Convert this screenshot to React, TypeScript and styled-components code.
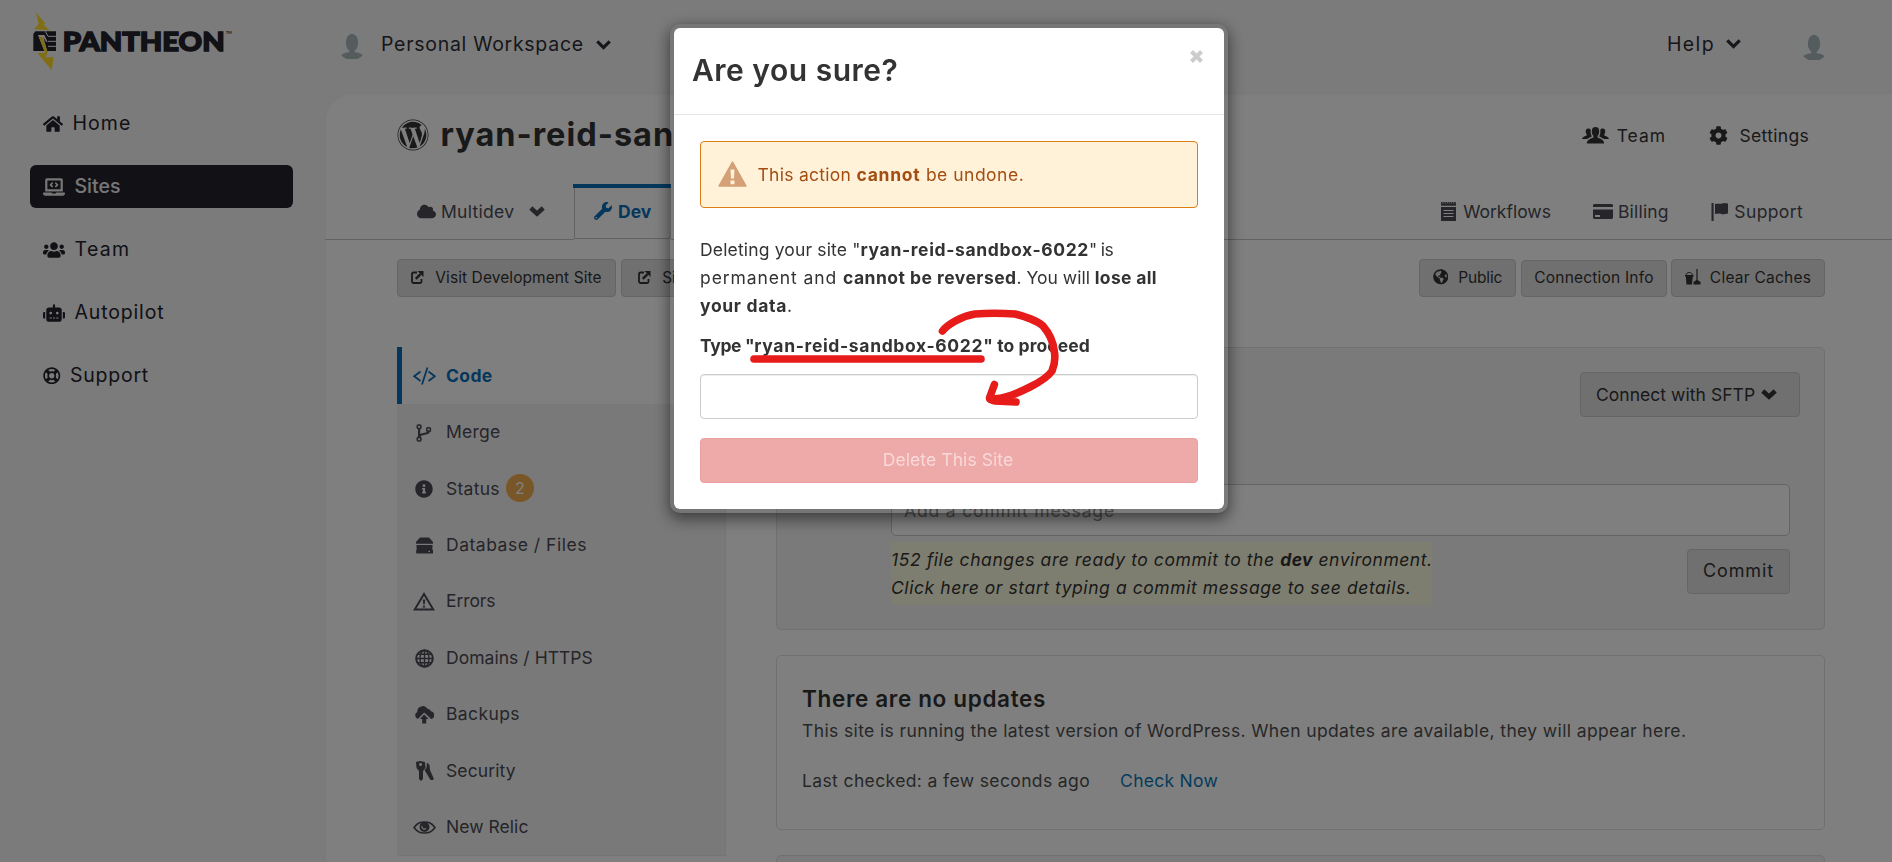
import React from "react";
import styled, { createGlobalStyle, css } from "styled-components";
import {
  FaCloud,
  FaCog,
  FaGlobeAmericas,
  FaHome,
  FaInfoCircle,
  FaLaptopCode,
  FaRegLifeRing,
  FaRobot,
  FaUsers,
  FaWordpress,
  FaWrench,
} from "react-icons/fa";

const GlobalStyle = createGlobalStyle`
  *, *::before, *::after { box-sizing: border-box; }
  body {
    margin: 0;
    background: #f7f7f7;
    color: #333;
    font-family: Inter, "Liberation Sans", sans-serif;
    font-size: 17.5px;
    overflow: hidden;
  }
  svg { display: block; flex: none; }
`;

/* ---------- shared ---------- */

const T = styled.span<{ $ls?: number; $bold?: boolean }>`
  letter-spacing: ${(p) => p.$ls ?? 0}px;
  font-weight: ${(p) => (p.$bold ? 700 : "inherit")};
  white-space: pre;
`;

const Page = styled.div`
  height: 862px;
  overflow: hidden;
  display: flex;
  flex-direction: column;
`;

/* ---------- top bar ---------- */

const TopBar = styled.header`
  flex: none;
  height: 92px;
  padding: 0 64px 0 20px;
  display: flex;
  align-items: flex-start;
`;

const LogoBox = styled.div`
  width: 318px;
  padding-top: 5px;
`;

const TopItem = styled.div<{ $gap: number; $top: number }>`
  display: flex;
  align-items: center;
  gap: ${(p) => p.$gap}px;
  height: 28px;
  margin-top: ${(p) => p.$top}px;
  font-size: 19.5px;
  color: #2e2e36;
`;

const TopRight = styled.div`
  margin-left: auto;
  display: flex;
  gap: 59px;
`;

const WorkspaceName = styled(T)`
  margin: 0 2px 2px 5px;
`;

const HelpLabel = styled(T)`
  margin-bottom: 1px;
`;

/* ---------- body ---------- */

const Body = styled.div`
  flex: 1;
  min-height: 0;
  display: flex;
`;

const Sidebar = styled.nav`
  flex: none;
  width: 324px;
  padding: 10px 31px 0 30px;
  display: flex;
  flex-direction: column;
  gap: 20px;
`;

const SideLink = styled.div<{ $active?: boolean }>`
  height: 43px;
  padding-left: 13px;
  display: flex;
  align-items: center;
  gap: 9.5px;
  border-radius: 6px;
  font-size: 19.5px;
  color: #23232d;
  ${T} {
    padding-bottom: 2px;
  }
  ${(p) =>
    p.$active &&
    css`
      background: #23232d;
      color: #efefef;
      font-weight: 500;
    `}
`;

const Panel = styled.main`
  flex: 1;
  min-width: 0;
  background: #fff;
  border: solid #f0f0f0;
  border-width: 1px 0 0 1px;
  border-radius: 28px 0 0 0;
  box-shadow: inset 1px 2px 3px rgba(0, 0, 0, 0.03);
`;

const TitleRow = styled.div`
  height: 84px;
  padding: 0 83px 0 72px;
  display: flex;
  align-items: center;
  justify-content: space-between;
`;

const SiteTitle = styled.h1`
  margin: 0;
  display: flex;
  align-items: center;
  gap: 11.5px;
  font-size: 32.5px;
  line-height: 40px;
  color: #333;
`;

const Links = styled.div<{ $gap: number }>`
  display: flex;
  align-items: center;
  gap: ${(p) => p.$gap}px;
`;

const IconLink = styled.div<{ $gap: number; $color?: string }>`
  display: flex;
  align-items: center;
  gap: ${(p) => p.$gap}px;
  color: ${(p) => p.$color ?? "#333"};
`;

const TabRow = styled.div`
  height: 63px;
  padding: 0 89px 0 72px;
  display: flex;
  align-items: flex-end;
  border-bottom: 1px solid #c4c4c4;
`;

const Tab = styled.div<{ $active?: boolean }>`
  height: 55px;
  padding-left: 20px;
  display: flex;
  align-items: center;
  gap: 5px;
  color: #4a4a54;
  ${(p) =>
    p.$active
      ? css`
          position: relative;
          width: 97px;
          margin-left: 1px;
          padding-left: 19px;
          gap: 6px;
          color: #0a6fb8;
          border: solid #c4c4c4;
          border-width: 0 1px 1px 1px;
          box-shadow: 0 1px 0 #fff;
          &::before {
            content: "";
            position: absolute;
            inset: 0 -1px auto -2px;
            height: 4px;
            background: #0a6fb8;
          }
        `
      : css`
          width: 176px;
        `}
`;

const TabChevron = styled.span`
  margin-left: 10px;
`;

const TabLinks = styled(Links)`
  height: 55px;
  margin-left: auto;
`;

const Actions = styled.div`
  padding: 19px 67px 0 72px;
  display: flex;
  align-items: flex-end;
  gap: 5px;
`;

const Button = styled.button<{ $w: number; $h?: number; $size?: number; $gap?: number }>`
  flex: none;
  width: ${(p) => p.$w}px;
  height: ${(p) => p.$h ?? 38}px;
  padding: 0 0 2px;
  display: flex;
  align-items: center;
  justify-content: center;
  gap: ${(p) => p.$gap ?? 10}px;
  font: 400 ${(p) => p.$size ?? 15.5}px Inter, sans-serif;
  color: #333;
  background: #e1e1e1;
  border: 1px solid #cbcbcb;
  border-radius: 4px;
`;

const InfoButton = styled(Button)`
  margin-right: -1px;
`;

const ConnectButton = styled(Button)`
  padding: 0 7px 0 0;
`;

const Spacer = styled.div`
  flex: 1;
`;

const Columns = styled.div`
  padding: 50px 67px 0 72px;
  display: flex;
  align-items: flex-start;
  gap: 50px;
`;

/* ---------- environment menu ---------- */

const Menu = styled.nav`
  flex: none;
  width: 329px;
  background: #f3f3f3;
  border: solid #eaeaea;
  border-width: 0 1px 1px 0;
`;

const MenuItem = styled.div<{ $active?: boolean }>`
  height: 56.4px;
  padding: 0 0 1px 15px;
  display: flex;
  align-items: center;
  color: #4a4a54;
  ${(p) =>
    p.$active &&
    css`
      height: 57px;
      padding-left: 10px;
      background: #fff;
      border-left: 5px solid #0a6fb8;
      color: #0a6fb8;
      font-weight: 700;
    `}
`;

const MenuIcon = styled.span`
  width: 24px;
  margin-right: 10px;
  padding-top: 2px;
  display: flex;
  justify-content: center;
`;

const Badge = styled.span`
  width: 28px;
  height: 28px;
  margin-left: 6px;
  border-radius: 50%;
  background: #f0ad4e;
  color: #fff;
  font-size: 16px;
  line-height: 28px;
  text-align: center;
`;

/* ---------- cards ---------- */

const Cards = styled.div`
  flex: 1;
  min-width: 0;
  display: flex;
  flex-direction: column;
  gap: 25.5px;
`;

const Card = styled.section<{ $grey?: boolean; $h: number }>`
  height: ${(p) => p.$h}px;
  border: 1px solid #e0e0e0;
  border-radius: 5px;
  background: ${(p) => (p.$grey ? "#f4f4f4" : "#fff")};
`;

const ConnectRow = styled.div`
  padding: 24px 24px 0 0;
  display: flex;
  justify-content: flex-end;
`;

const CommitArea = styled.div`
  padding: 67px 34px 0 114px;
`;

const CommitInput = styled.div`
  height: 52px;
  padding: 0 12px;
  display: flex;
  align-items: center;
  color: #8f8f8f;
  background: #fff;
  border: 1px solid #c8c8c8;
  border-radius: 5px;
`;

const CommitFooter = styled.div`
  padding-top: 6px;
  display: flex;
  justify-content: space-between;
  align-items: flex-start;
`;

const ChangesNote = styled.div`
  height: 63px;
  padding-top: 4px;
  line-height: 28px;
  font-style: italic;
  color: #333;
  background: #fcfce1;
`;

const CommitButton = styled(Button)`
  margin-top: 7px;
`;

const UpdatesCard = styled(Card)`
  padding: 29px 25px 0;
  color: #4f4f4f;
  line-height: 28px;
`;

const CardTitle = styled.h2`
  margin: 0;
  font-size: 22.5px;
  font-weight: 600;
  line-height: 28px;
  color: #333;
`;

const CardText = styled.p<{ $top: number }>`
  margin: ${(p) => p.$top}px 0 0;
`;

const TextLink = styled(T)`
  margin-left: 30px;
  color: #0b79b8;
`;

/* ---------- dialog ---------- */

const Backdrop = styled.div`
  position: fixed;
  inset: 0;
  padding: 23px 0 0 6px;
  display: flex;
  justify-content: center;
  align-items: flex-start;
  background: rgba(0, 0, 0, 0.5);
`;

const Dialog = styled.div`
  width: 560px;
  height: 491px;
  background: #fff;
  background-clip: padding-box;
  border: 5px solid rgba(0, 0, 0, 0.03);
  border-radius: 11px;
  box-shadow: 0 5px 15px rgba(0, 0, 0, 0.5);
`;

const DialogHeader = styled.div`
  height: 87px;
  padding: 0 21px 0 18px;
  display: flex;
  justify-content: space-between;
  border-bottom: 1px solid #e5e5e5;
`;

const DialogTitle = styled.h2`
  margin: 0;
  font-size: 30px;
  font-weight: 600;
  line-height: 84px;
`;

const CloseButton = styled.span`
  padding-top: 22px;
`;

const DialogBody = styled.div`
  padding: 26px 26px 0;
`;

const Alert = styled.div`
  height: 67px;
  padding: 0 0 1px 17px;
  display: flex;
  align-items: center;
  gap: 10.5px;
  color: #a24e13;
  background: #fff2d9;
  border: 1px solid #dc7d18;
  border-radius: 4px;
`;

const Message = styled.p`
  margin: 28px 0 0;
  line-height: 28px;
`;

const FieldLabel = styled.label`
  display: block;
  margin-top: 12px;
  line-height: 28px;
`;

const Field = styled.input`
  display: block;
  width: 100%;
  height: 45px;
  margin-top: 14px;
  border: 1px solid #ccc;
  border-radius: 4px;
  box-shadow: inset 0 1px 1px rgba(0, 0, 0, 0.075);
`;

const DeleteButton = styled.button`
  width: 100%;
  height: 45px;
  margin-top: 19px;
  padding: 0 2px 3px 0;
  font: 400 17.5px Inter, sans-serif;
  color: #f8d9d9;
  background: #eea9a9;
  border: 1px solid #ec9f9f;
  border-radius: 4px;
`;

const Markup = styled.svg`
  position: absolute;
  left: 740px;
  top: 300px;
`;

/* ---------- drawings ---------- */

const Chevron = ({ w, h, s }: { w: number; h: number; s: number }) => (
  <svg width={w} height={h} viewBox={`0 0 ${w} ${h}`} fill="none" stroke="currentColor" strokeWidth={s}>
    <path d={`M${s * 0.4} ${s * 0.45} L${w / 2} ${h - s * 0.75} L${w - s * 0.4} ${s * 0.45}`} />
  </svg>
);

const Logo = () => (
  <svg width="220" height="80" viewBox="0 0 660 240">
    <path fill="#ffdc28" d="M48 22L76 56L70 59L90 76L42 73L56 57Z" />
    <path fill="#ffdc28" d="M52 144H82L77 157H101L95 196Z" />
    <path fill="#23232d" d="M46 79H108V138H40V87Z" />
    <path fill="#f7f7f7" d="M54 90H73L83 112L78 110L70 96L82 140H74Z" />
    <path fill="#ffdc28" d="M56 94L67 97L84 144H75Z" />
    <path stroke="#f7f7f7" strokeWidth="3" fill="none" d="M76 79L84 94H108M84 109H108M84 124H108" />
    <text
      x="128"
      y="137"
      fontFamily="Lato, sans-serif"
      fontWeight="900"
      fontSize="79"
      textLength="486"
      lengthAdjust="spacingAndGlyphs"
      fill="#23232d"
      stroke="#23232d"
      strokeWidth="4.500"
    >
      PANTHEON
    </text>
    <text x="618" y="87" fontFamily="Lato, sans-serif" fontWeight="700" fontSize="11" fill="#23232d">
      TM
    </text>
  </svg>
);

const Avatar = () => (
  <svg width="28" height="28" viewBox="0 0 28 28">
    <circle cx="14" cy="14" r="14" fill="#f5f8f9" />
    <ellipse cx="14" cy="11.7" rx="6.2" ry="9" fill="#aab8bd" />
    <path d="M11.5 18h5v3c3 .8 6.200 1.200 8.300 3A14 14 0 0 1 3.200 24c2.100-1.800 5.300-2.200 8.300-3Z" fill="#aab8bd" />
  </svg>
);

const CodeIcon = () => (
  <svg width="23" height="18" viewBox="0 0 23 18" fill="none" stroke="currentColor" strokeWidth="1.8">
    <path d="M7.500 4.500L1.200 9.300L7.500 14M15.500 4.500L21.800 9.300L15.500 14M14.500.5L9 17.500" />
  </svg>
);

const BranchIcon = () => (
  <svg width="16" height="18" viewBox="0 0 16 18" fill="none" stroke="currentColor" strokeWidth="1.600">
    <rect x="1.300" y="1" width="3.600" height="3.600" rx="1" />
    <rect x="1.300" y="13.400" width="3.600" height="3.600" rx="1" />
    <rect x="10.800" y="3.800" width="3.600" height="3.600" rx="1" />
    <path d="M3.100 5V13.500M12.600 7.800C12.600 10.500 5.500 9 3.500 11.800" strokeWidth="2.200" />
  </svg>
);

const DiskIcon = () => (
  <svg width="17" height="17" viewBox="0 0 17 17" fill="currentColor">
    <path d="M4 .5H13L17 5V6.800H0V5Z" />
    <path fillRule="evenodd" d="M.5 8H16.500V11.300L16 12L17 13V16.500H.2V13L1 12L.5 11.300ZM12.500 13.800V15H14V13.800Z" />
  </svg>
);

const ErrorIcon = () => (
  <svg width="22" height="19" viewBox="0 0 22 19">
    <path d="M11 2L20.300 17.500H1.700Z" fill="none" stroke="currentColor" strokeWidth="2" />
    <path d="M9.800 7.500H12.200L11.700 12.500H10.300ZM9.900 13.700H12.100V15.500H9.900Z" fill="currentColor" />
  </svg>
);

const GlobeIcon = () => (
  <svg width="19" height="19" viewBox="0 0 19 19" fill="none" stroke="currentColor" strokeWidth="1.400">
    <circle cx="9.500" cy="9.500" r="8.300" strokeWidth="2" />
    <ellipse cx="9.500" cy="9.500" rx="4.500" ry="8.300" />
    <path d="M9.500 1V18M1 9.500H18M2.500 5.300H16.500M2.500 13.700H16.500" />
  </svg>
);

const BackupIcon = () => (
  <svg width="19" height="18" viewBox="0 0 19 18" fill="currentColor">
    <path d="M3.500 13A3.700 3.700 0 0 1 2.300 6A5.500 5.500 0 0 1 12.500 2.800A4.200 4.200 0 0 1 16 5.200A4 4 0 0 1 16.200 13L9.200 6.500L2.800 13Z" />
    <path d="M9.200 8.500L13.500 13H11.200V17.500H7.200V13H5Z" />
  </svg>
);

const KeysIcon = () => (
  <svg width="19" height="20" viewBox="0 0 19 20" fill="currentColor">
    <path fillRule="evenodd" d="M1 1L5 0L10 1L10.500 7L8 10V18L6 20L4 18V10L1.500 7ZM5.500 2A1.500 1.500 0 1 0 5.600 2Z" />
    <path d="M12 1.500L14.500 4L15 9L18.500 17V19H15.500L9.500 9L11.500 7Z" />
  </svg>
);

const EyeIcon = () => (
  <svg width="23" height="13" viewBox="0 0 23 13">
    <path d="M1 6.500C5 1 8 1 11.500 1S18 1 22 6.500C18 12 15 12 11.500 12S5 12 1 6.500Z" fill="none" stroke="currentColor" strokeWidth="1.600" />
    <circle cx="11.500" cy="6" r="5" fill="currentColor" />
    <path d="M9 5A2.500 2.500 0 0 0 13 7.500" fill="none" stroke="#f3f3f3" strokeWidth="1.200" />
  </svg>
);

const GroupIcon = () => (
  <svg width="27" height="17" viewBox="0 0 27 17" fill="currentColor">
    <path d="M10 3C10 1 11.500 0 13.500 0S17 1 17 3C17.500 5 17 7.500 15.600 8.800V10.500C18 11.500 22 12.500 22.200 16.500H4.800C5 12.500 9 11.500 11.400 10.500V8.800C10 7.500 9.500 5 10 3Z" />
    <path d="M8.700 3.200C8.500 5.500 8.800 8 10 9.300L5 12H0C.2 10 3 9.300 4.700 8.600V7.500C3.200 5.500 3.200 2 6 1.600C7.500 1.600 8.500 2 8.700 3.200Z" />
    <path d="M18.300 3.200C18.500 5.500 18.200 8 17 9.300L22 12H27C26.800 10 24 9.300 22.300 8.600V7.500C23.800 5.500 23.800 2 21 1.600C19.500 1.600 18.500 2 18.300 3.200Z" />
  </svg>
);

const NotepadIcon = () => (
  <svg width="15" height="19" viewBox="0 0 15 19">
    <path d="M0 5H15V19H0Z" fill="currentColor" />
    <path d="M0 .8H15" stroke="currentColor" strokeWidth="1.600" strokeDasharray="1.600 .6" />
    <path d="M0 2.500H15" stroke="currentColor" strokeWidth="2.400" />
    <path d="M2.500 8.500H12.500M2.500 11.500H12.500M2.500 14.500H12.500" stroke="#fff" strokeWidth="1.200" />
  </svg>
);

const CardIcon = () => (
  <svg width="20" height="15" viewBox="0 0 20 15" fill="currentColor">
    <path d="M1 0H19L20 1V3H0V1Z" />
    <path fillRule="evenodd" d="M0 5.500H20V14L19 15H1L0 14ZM2 11V13H7V11Z" />
  </svg>
);

const FlagIcon = () => (
  <svg width="17" height="18" viewBox="0 0 17 18" fill="currentColor">
    <path d="M.5 0H2.600V18H.5ZM4 1C7 .5 9 1 10.500 .8L13 0L17 .5V10.500L11.500 11.500L9 10.500L4 11Z" />
  </svg>
);

const OpenIcon = () => (
  <svg width="13" height="13" viewBox="0 0 13 13" fill="none" stroke="currentColor" strokeWidth="1.800">
    <path d="M6 1.500H2.500A1.500 1.500 0 0 0 1 3V10.500A1.500 1.500 0 0 0 2.500 12H9A1.500 1.500 0 0 0 10.500 10.500V8" />
    <path d="M4.800 7.800L9.500 3.200" strokeWidth="2.400" />
    <path d="M6.500 0H12.500V6Z" fill="currentColor" stroke="none" />
  </svg>
);

const BucketIcon = () => (
  <svg width="16" height="16" viewBox="0 0 16 16">
    <path d="M1 6.500C1 2.500 7.500 2.500 7.500 6.500" fill="none" stroke="currentColor" strokeWidth="1" />
    <path d="M0 6H8.500V7.500H7.800L7 15.500H1.500L.8 7.500H0Z" fill="currentColor" />
    <path d="M11.400 0H12.600V11L15.500 13V15.500H8.500V13L11.400 11Z" fill="currentColor" />
  </svg>
);

const WarningIcon = () => (
  <svg width="29" height="26" viewBox="0 0 29 26">
    <path d="M14.500 1L28 25H1Z" fill="#d3a077" stroke="#d3a077" strokeWidth="1.500" strokeLinejoin="round" />
    <path d="M12.500 8.500H16.500L16 17.500H13ZM12.500 19.500H16.500V23.200H12.500Z" fill="#fff2d9" />
  </svg>
);

const CloseIcon = () => (
  <svg width="13" height="13" viewBox="0 0 13 13" stroke="#ccc" strokeWidth="4.200">
    <path d="M1.500 1.500L11.500 11.500M11.500 1.500L1.500 11.500" />
  </svg>
);

const menu: { label: string; ls: number; icon: React.ReactNode; badge?: number }[] = [
  { label: "Merge", ls: 0.21, icon: <BranchIcon /> },
  { label: "Status", ls: 0.27, icon: <FaInfoCircle size={18} />, badge: 2 },
  { label: "Database / Files", ls: 0.52, icon: <DiskIcon /> },
  { label: "Errors", ls: -0.1, icon: <ErrorIcon /> },
  { label: "Domains / HTTPS", ls: 0.04, icon: <GlobeIcon /> },
  { label: "Backups", ls: 0.4, icon: <BackupIcon /> },
  { label: "Security", ls: 0.1, icon: <KeysIcon /> },
  { label: "New Relic", ls: 0.05, icon: <EyeIcon /> },
];

export default function App() {
  return (
    <>
      <GlobalStyle />
      <Page>
        <TopBar>
          <LogoBox>
            <Logo />
          </LogoBox>
          <TopItem $gap={10} $top={31}>
            <Avatar />
            <WorkspaceName $ls={0.72}>Personal Workspace</WorkspaceName>
            <Chevron w={15} h={10} s={3.2} />
          </TopItem>
          <TopRight>
            <TopItem $gap={11} $top={30}>
              <HelpLabel $ls={1.4}>Help</HelpLabel>
              <Chevron w={15} h={10} s={3.2} />
            </TopItem>
            <TopItem $gap={0} $top={32}>
              <Avatar />
            </TopItem>
          </TopRight>
        </TopBar>

        <Body>
          <Sidebar>
            <SideLink>
              <FaHome size={20} />
              <T $ls={1.09}>Home</T>
            </SideLink>
            <SideLink $active>
              <FaLaptopCode size={22} />
              <T>Sites</T>
            </SideLink>
            <SideLink>
              <FaUsers size={22} />
              <T $ls={1.34}>Team</T>
            </SideLink>
            <SideLink>
              <FaRobot size={22} />
              <T $ls={0.84}>Autopilot</T>
            </SideLink>
            <SideLink>
              <FaRegLifeRing size={17.5} />
              <T $ls={0.76}>Support</T>
            </SideLink>
          </Sidebar>

          <Panel>
            <TitleRow>
              <SiteTitle>
                <FaWordpress size={32} />
                <T $ls={0.98}>ryan-reid-sandbox-6022</T>
              </SiteTitle>
              <Links $gap={42.5}>
                <IconLink $gap={8}>
                  <GroupIcon />
                  <T $ls={1}>Team</T>
                </IconLink>
                <IconLink $gap={12}>
                  <FaCog size={19} />
                  <T $ls={0.3}>Settings</T>
                </IconLink>
              </Links>
            </TitleRow>

            <TabRow>
              <Tab>
                <FaCloud size={19} />
                <T $ls={0.28}>Multidev</T>
                <TabChevron>
                  <Chevron w={16} h={11} s={4.5} />
                </TabChevron>
              </Tab>
              <Tab $active>
                <FaWrench size={18} />
                <T $bold>Dev</T>
              </Tab>
              <TabLinks $gap={42.5}>
                <IconLink $gap={7.5} $color="#4a4a54">
                  <NotepadIcon />
                  <T>Workflows</T>
                </IconLink>
                <IconLink $gap={4.5} $color="#4a4a54">
                  <CardIcon />
                  <T $ls={0.2}>Billing</T>
                </IconLink>
                <IconLink $gap={6} $color="#4a4a54">
                  <FlagIcon />
                  <T $ls={0.37}>Support</T>
                </IconLink>
              </TabLinks>
            </TabRow>

            <Actions>
              <Button $w={219} $gap={11}>
                <OpenIcon />
                <T $ls={0.08}>Visit Development Site</T>
              </Button>
              <Button $w={137} $gap={11}>
                <OpenIcon />
                <T>Site Admin</T>
              </Button>
              <Spacer />
              <Button $w={97}>
                <FaGlobeAmericas size={15.5} />
                <T $ls={-0.15}>Public</T>
              </Button>
              <InfoButton $w={146} $h={37}>
                <T $ls={0.2}>Connection Info</T>
              </InfoButton>
              <Button $w={154} $gap={9}>
                <BucketIcon />
                <T $ls={0.24}>Clear Caches</T>
              </Button>
            </Actions>

            <Columns>
              <Menu>
                <MenuItem $active>
                  <MenuIcon>
                    <CodeIcon />
                  </MenuIcon>
                  <T $ls={0.35}>Code</T>
                </MenuItem>
                {menu.map((m) => (
                  <MenuItem key={m.label}>
                    <MenuIcon>{m.icon}</MenuIcon>
                    <T $ls={m.ls}>{m.label}</T>
                    {m.badge && <Badge>{m.badge}</Badge>}
                  </MenuItem>
                ))}
              </Menu>

              <Cards>
                <Card $grey $h={282.5}>
                  <ConnectRow>
                    <ConnectButton $w={220} $h={45} $size={17.5} $gap={6}>
                      <T $ls={0.05}>Connect with SFTP</T>
                      <Chevron w={16} h={11} s={4.5} />
                    </ConnectButton>
                  </ConnectRow>
                  <CommitArea>
                    <CommitInput>
                      <T $ls={0.85}>Add a commit message</T>
                    </CommitInput>
                    <CommitFooter>
                      <ChangesNote>
                        <T $ls={0.58}>152 file changes are ready to commit to the </T>
                        <T $ls={0.46} $bold>
                          dev
                        </T>
                        <T $ls={0.5}> environment.</T>
                        <br />
                        <T $ls={0.57}>Click here or start typing a commit message to see details.</T>
                      </ChangesNote>
                      <CommitButton $w={103} $h={45} $size={18}>
                        <T $ls={0.9}>Commit</T>
                      </CommitButton>
                    </CommitFooter>
                  </CommitArea>
                </Card>

                <UpdatesCard $h={174.5}>
                  <CardTitle>
                    <T $ls={0.65}>There are no updates</T>
                  </CardTitle>
                  <CardText $top={4}>
                    <T $ls={0.38}>
                      This site is running the latest version of WordPress. When updates are available, they will appear here.
                    </T>
                  </CardText>
                  <CardText $top={22}>
                    <T $ls={0.38}>Last checked: a few seconds ago</T>
                    <TextLink $ls={0.28}>Check Now</TextLink>
                  </CardText>
                </UpdatesCard>

                <Card $grey $h={120} />
              </Cards>
            </Columns>
          </Panel>
        </Body>
      </Page>

      <Backdrop>
        <Dialog>
          <DialogHeader>
            <DialogTitle>
              <T $ls={0.5}>Are you sure?</T>
            </DialogTitle>
            <CloseButton>
              <CloseIcon />
            </CloseButton>
          </DialogHeader>
          <DialogBody>
            <Alert>
              <WarningIcon />
              <span>
                <T $ls={0.28}>This action </T>
                <T $ls={0.74} $bold>
                  cannot
                </T>
                <T $ls={0.5}> be undone.</T>
              </span>
            </Alert>
            <Message>
              <T $ls={0.16}>Deleting your site "</T>
              <T $ls={0.63} $bold>
                ryan-reid-sandbox-6022
              </T>
              <T $ls={-0.6}>" is</T>
              <br />
              <T $ls={0.91}>permanent and </T>
              <T $ls={0.47} $bold>
                cannot be reversed
              </T>
              <T>. You will </T>
              <T $ls={0.31} $bold>
                lose all
              </T>
              <br />
              <T $ls={0.67} $bold>
                your data
              </T>
              <T>.</T>
            </Message>
            <FieldLabel>
              <T $ls={-0.35} $bold>
                {'Type "'}
              </T>
              <T $ls={0.65} $bold>
                ryan-reid-sandbox-6022
              </T>
              <T $ls={0.1} $bold>
                {'" to proceed'}
              </T>
            </FieldLabel>
            <Field />
            <DeleteButton>
              <T $ls={0.08}>Delete This Site</T>
            </DeleteButton>
          </DialogBody>
        </Dialog>
        <Markup
          width="330"
          height="120"
          viewBox="740 300 330 120"
          fill="none"
          stroke="#e81b1b"
          strokeWidth="7.6"
          strokeLinecap="round"
          strokeLinejoin="round"
        >
          <path d="M754 359H981" />
          <path d="M942.500 331C948 324 962 316 975 314C987 313 1002 313 1015 314C1024 316 1038 321 1043 326C1049 333 1053 341 1054 350C1056 358 1054 366 1052 371C1048 377 1040 382 1030 387C1018 393 1005 399 990 399" />
          <path d="M994.400 384.500L989.500 398C990 399 992 400.500 995 401L1016 402" />
        </Markup>
      </Backdrop>
    </>
  );
}
